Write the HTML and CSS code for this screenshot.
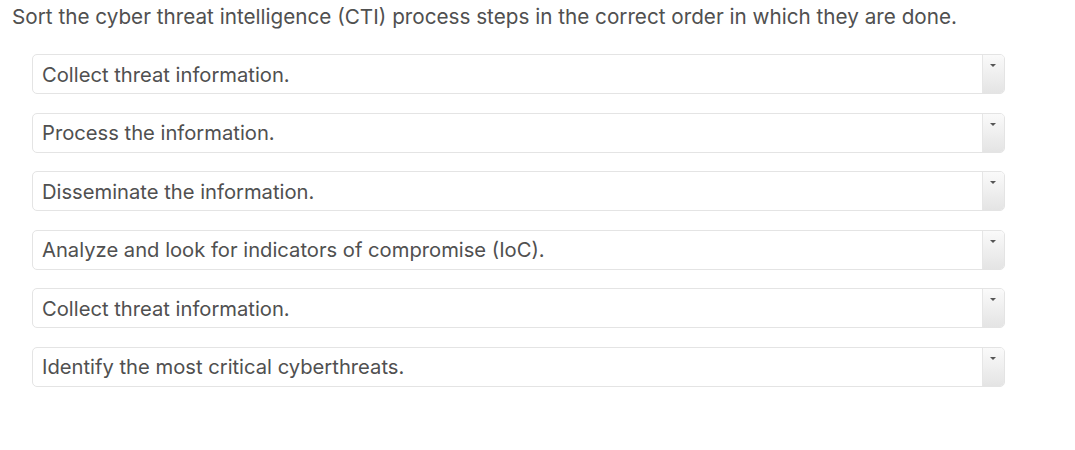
FILE: index.html
```html
<!DOCTYPE html>
<html lang="en">
<head>
  <meta charset="UTF-8">
  <title>CTI process order</title>
  <link rel="stylesheet" href="styles.css">
</head>
<body>
  <div class="question">
    <p class="prompt">Sort the cyber threat intelligence (CTI) process steps in the correct order in which they are done.</p>

    <!-- 並べ替え項目 -->
    <div class="steps">
      <div class="step"><span class="step-text">Collect threat information.</span><span class="step-toggle"></span></div>
      <div class="step"><span class="step-text">Process the information.</span><span class="step-toggle"></span></div>
      <div class="step"><span class="step-text">Disseminate the information.</span><span class="step-toggle"></span></div>
      <div class="step"><span class="step-text">Analyze and look for indicators of compromise (IoC).</span><span class="step-toggle"></span></div>
      <div class="step"><span class="step-text">Collect threat information.</span><span class="step-toggle"></span></div>
      <div class="step"><span class="step-text">Identify the most critical cyberthreats.</span><span class="step-toggle"></span></div>
    </div>
  </div>
</body>
</html>
```

FILE: styles.css
```css
body {
  font-family: 'Inter', 'Liberation Sans', sans-serif;
  margin: 0;
  padding: 0;
  background-color: #fff;
  color: #505050;
}
.question {
  padding: 4px 0 0 12px;
}
.prompt {
  font-size: 20.7px;
  margin: 0 0 24px 0;
  line-height: 26px;
}
.steps {
  margin-left: 20px;
  width: 973px;
  display: flex;
  flex-direction: column;
  gap: 18.6px;
}
.step {
  display: flex;
  height: 40px;
  border: 1px solid #e4e4e4;
  border-radius: 5px;
  box-sizing: border-box;
  overflow: hidden;
}
.step-text {
  flex: 1;
  display: flex;
  align-items: center;
  padding-left: 9px;
  font-size: 20.2px;
  color: #505050;
}
.step-toggle {
  width: 21px;
  border-left: 1px solid #e6e6e6;
  background: linear-gradient(to bottom, #fafafa, #e4e4e4);
  position: relative;
}
.step-toggle::after {
  content: '';
  position: absolute;
  top: 9px;
  left: 7px;
  border-left: 3px solid transparent;
  border-right: 3px solid transparent;
  border-top: 3px solid #555;
}
```
